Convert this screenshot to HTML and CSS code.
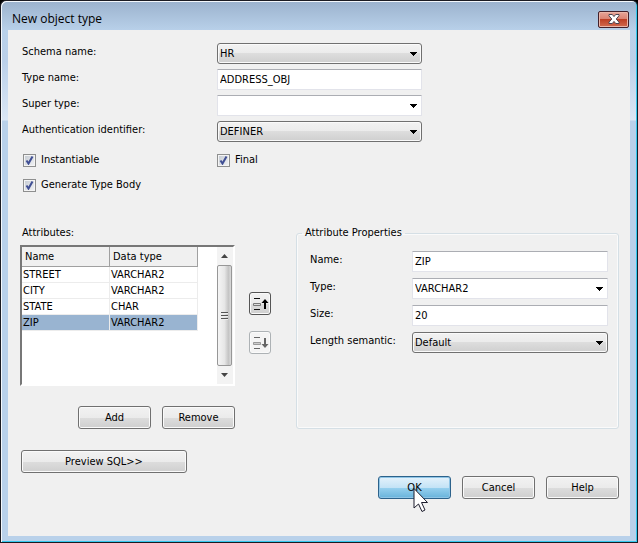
FILE: index.html
```html
<!DOCTYPE html>
<html lang="en">
<head>
    <meta charset="UTF-8">
    <title>New object type</title>
    <link rel="stylesheet" href="styles.css">
</head>
<body>
    <div class="window">
        <header class="titlebar">
            <h1>New object type</h1>
            <button type="button" class="close" aria-label="Close">
                <svg width="12" height="10" viewBox="0 0 12 10">
                    <path d="M1 .5h3.300L6 2.600 7.700 .5H11v1.300L8.200 5 11 8.200v1.300H7.700L6 7.400 4.300 9.500H1V8.200L3.800 5 1 1.800z" fill="#fff" stroke="#4c4552"/>
                </svg>
            </button>
        </header>

        <form class="panel">
            <div class="fields">
                <label for="schema">Schema name:</label>
                <select id="schema"><option>HR</option></select>
                <label for="typeName">Type name:</label>
                <input type="text" id="typeName" value="ADDRESS_OBJ">
                <label for="superType">Super type:</label>
                <select id="superType" class="combo"><option></option></select>
                <label for="auth">Authentication identifier:</label>
                <select id="auth"><option>DEFINER</option></select>
            </div>

            <div class="checks">
                <label><input type="checkbox" checked> Instantiable</label>
                <label><input type="checkbox" checked> Final</label>
                <label><input type="checkbox" checked> Generate Type Body</label>
            </div>

            <div class="middle">
                <div class="attributes">
                    <h2 id="attrTitle">Attributes:</h2>
                    <div class="listbox">
                        <table aria-labelledby="attrTitle">
                            <thead>
                                <tr><th>Name</th><th>Data type</th></tr>
                            </thead>
                            <tbody>
                                <tr><td>STREET</td><td>VARCHAR2</td></tr>
                                <tr><td>CITY</td><td>VARCHAR2</td></tr>
                                <tr><td>STATE</td><td>CHAR</td></tr>
                                <tr class="selected"><td>ZIP</td><td>VARCHAR2</td></tr>
                            </tbody>
                        </table>
                        <div class="scrollbar">
                            <svg width="15" height="18" viewBox="0 0 15 18"><path d="M4 11h7L7.500 7z" fill="#444"/></svg>
                            <div class="thumb"><span></span></div>
                            <svg width="15" height="18" viewBox="0 0 15 18"><path d="M4 7h7l-3.500 4z" fill="#444"/></svg>
                        </div>
                    </div>
                    <div class="list-buttons">
                        <button type="button">Add</button>
                        <button type="button">Remove</button>
                    </div>
                </div>

                <div class="order">
                    <button type="button" aria-label="Move up">
                        <svg width="18" height="14" viewBox="0 0 18 14">
                            <path d="M3 1.500h6M3 12.500h6" stroke="#111"/>
                            <path d="M2.500 6.500h7v2h-7z" fill="#ddd" stroke="#777"/>
                            <path d="M14 2l3.500 4H15v6h-2V6h-2.500z" fill="#000"/>
                        </svg>
                    </button>
                    <button type="button" aria-label="Move down" disabled>
                        <svg width="18" height="14" viewBox="0 0 18 14">
                            <path d="M3 1.500h6M3 12.500h6" stroke="#666"/>
                            <path d="M2.500 6.500h7v2h-7z" fill="#ccc" stroke="#999"/>
                            <path d="M14 12l3.500-4H15V2h-2v6h-2.500z" fill="#666"/>
                        </svg>
                    </button>
                </div>

                <fieldset>
                    <legend>Attribute Properties</legend>
                    <div class="props">
                        <label for="attrName">Name:</label>
                        <input type="text" id="attrName" value="ZIP">
                        <label for="attrType">Type:</label>
                        <select id="attrType" class="combo"><option>VARCHAR2</option></select>
                        <label for="attrSize">Size:</label>
                        <input type="text" id="attrSize" value="20">
                        <label for="semantic">Length semantic:</label>
                        <select id="semantic"><option>Default</option></select>
                    </div>
                </fieldset>
            </div>

            <button type="button" class="preview">Preview SQL&gt;&gt;</button>

            <div class="footer">
                <button type="button" class="ok">OK
                    <svg class="cursor" width="17" height="26" viewBox="0 0 17 26">
                        <path d="M1 1.500v19.500l4.500-4 3.500 7.500 3-1.500-3.500-7.500h6z" fill="#fff" stroke="#1c1c2c"/>
                    </svg>
                </button>
                <button type="button">Cancel</button>
                <button type="button">Help</button>
            </div>
        </form>
    </div>
</body>
</html>
```

FILE: styles.css
```css
* {
    box-sizing: border-box;
}
body {
    margin: 0;
    background: #000;
    font: 11px/16px "DejaVu Sans Condensed", "Noto Sans", sans-serif;
    color: #000;
}
.window {
    display: flex;
    flex-direction: column;
    min-height: 100vh;
    padding: 0 6px 6px;
    border: 1px solid #1b1b22;
    border-right: 1px solid #10222c;
    border-radius: 6px 6px 0 0;
    background: linear-gradient(#9bb2cd, #b9d1ea 30px, #bbd0e9 60px, #dbe7f5 119px, #b9d1ea 120px);
    box-shadow: inset 1px 1px #f4f8fc, inset -1px -1px #35c8ee;
}
.titlebar {
    display: flex;
    justify-content: space-between;
    align-items: center;
    height: 29px;
    padding: 7px 2px 0 5px;
}
.titlebar h1 {
    margin: 0;
    font: 12px/20px "Open Sans", sans-serif;
}
button {
    height: 23px;
    padding: 0;
    border: 1px solid #707070;
    border-radius: 3px;
    background: linear-gradient(#f2f2f2, #ebebeb 50%, #dddddd 50%, #cfcfcf);
    box-shadow: inset 0 0 0 1px #fafafa;
    font: inherit;
    color: #000;
}
.close {
    display: grid;
    place-items: center;
    width: 31px;
    height: 17px;
    border-color: #43202a;
    border-radius: 2px;
    background: linear-gradient(#e8a598, #d9806f 50%, #bd3f25 50%, #d26b50);
    box-shadow: inset 0 0 0 1px #eab5a8;
}
.panel {
    flex: 1;
    margin: 0 1px;
    padding: 13px 11px 20px 12px;
    background: #f0f0f0;
}
.fields, .props {
    display: grid;
    gap: 5px 0;
}
.fields {
    grid-template-columns: 197px minmax(0, 205px);
}
.fields label, .props label {
    display: flex;
    align-items: center;
    padding: 0 0 3px 2px;
}
input[type="text"], select {
    width: 100%;
    height: 21px;
    margin: 0;
    padding: 0 2px;
    border: 1px solid #e2e3ea;
    border-top-color: #abadb3;
    border-radius: 1px;
    background: #fff;
    font: inherit;
    color: #000;
}
select {
    appearance: none;
    border: 1px solid #707070;
    border-radius: 3px;
    background: url("data:image/svg+xml,%3Csvg xmlns='http://www.w3.org/2000/svg' width='7' height='4' shape-rendering='crispEdges'%3E%3Cpath d='M0 0h7v1H0zM1 1h5v1H1zM2 2h3v1H2zM3 3h1v1H3z'/%3E%3C/svg%3E") no-repeat right 4px center, linear-gradient(#f2f2f2, #ebebeb 50%, #dddddd 50%, #cfcfcf);
    box-shadow: inset 0 0 0 1px #fafafa;
}
select.combo {
    border: 1px solid #e2e3ea;
    border-top-color: #abadb3;
    border-radius: 1px;
    background-color: #fff;
    background-image: url("data:image/svg+xml,%3Csvg xmlns='http://www.w3.org/2000/svg' width='7' height='4' shape-rendering='crispEdges'%3E%3Cpath d='M0 0h7v1H0zM1 1h5v1H1zM2 2h3v1H2zM3 3h1v1H3z'/%3E%3C/svg%3E");
    box-shadow: none;
}
.checks {
    display: grid;
    grid-template-columns: 194px 1fr;
    gap: 5px 0;
    padding: 8px 0 0 3px;
}
.checks label {
    display: flex;
    align-items: center;
    gap: 5px;
    height: 20px;
}
.checks input {
    appearance: none;
    width: 13px;
    height: 13px;
    margin: 0;
    border: 1px solid #8e8f8f;
    background: url("data:image/svg+xml,%3Csvg xmlns='http://www.w3.org/2000/svg' width='11' height='11'%3E%3Cpath d='M2.500 5.500l2 3 4-7' fill='none' stroke='%23404f94' stroke-width='2'/%3E%3C/svg%3E"), linear-gradient(135deg, #c3c9d1, #f3f4f6);
    box-shadow: inset 0 0 0 1px #f4f4f4;
}
.middle {
    display: flex;
    padding-top: 30px;
}
.attributes {
    width: 215px;
}
.attributes h2 {
    margin: 0 0 4px 2px;
    font: inherit;
}
.listbox {
    display: flex;
    justify-content: space-between;
    height: 141px;
    border: 2px solid #fff;
    border-top-color: #777;
    border-left-color: #777;
    background: #fff;
}
table {
    align-self: flex-start;
    width: 176px;
    table-layout: fixed;
    border-spacing: 0;
}
th {
    height: 20px;
    padding: 0 3px;
    border-right: 1px solid #a0a0a0;
    border-bottom: 1px solid #a0a0a0;
    background: #f0f0f0;
    font-weight: normal;
    text-align: left;
}
td {
    height: 16px;
    padding: 0 1px;
    border-right: 1px solid #ececec;
    border-bottom: 1px solid #ececec;
    line-height: 15px;
}
.selected td {
    background: #99b4d1;
}
.scrollbar {
    display: flex;
    flex-direction: column;
    width: 16px;
    background: #f3f3f3;
}
.thumb {
    flex: 1;
    display: grid;
    place-items: center;
    width: 15px;
    border: 1px solid #979797;
    border-radius: 2px;
    background: linear-gradient(90deg, #f5f5f5, #e6e6e6 50%, #c4c4c4 80%, #dadada);
}
.thumb span {
    width: 7px;
    height: 8px;
    background: repeating-linear-gradient(#555 0 1px, #eee 1px 2px, transparent 2px 3px);
}
.list-buttons {
    display: flex;
    justify-content: flex-end;
    gap: 11px;
    padding-top: 20px;
}
.list-buttons button, .footer button {
    width: 73px;
}
.order {
    display: flex;
    flex-direction: column;
    gap: 16px;
    padding: 67px 25px 0 14px;
}
.order button {
    display: grid;
    place-items: center;
    width: 22px;
    border-color: #555;
}
.order button:disabled {
    border-color: #adb2b5;
    background: #f4f4f4;
}
fieldset {
    flex: 1;
    min-width: 0;
    margin: 0;
    padding: 10px 10px 0 11px;
    border: 1px solid #d5dfe5;
    border-radius: 3px;
    box-shadow: inset 0 0 0 1px #fafafa;
}
legend {
    margin-left: -6px;
    padding: 0 3px;
}
.props {
    grid-template-columns: 104px minmax(0, 1fr);
    row-gap: 6px;
}
.preview {
    display: block;
    width: 166px;
    margin: 21px 0 3px 1px;
}
.footer {
    display: flex;
    justify-content: flex-end;
    gap: 11px;
}
.footer .ok {
    position: relative;
    border-color: #2c628b;
    background: linear-gradient(#e4f2fb, #c4e3f6 50%, #98d1ef 50%, #68b3db);
    box-shadow: inset 0 0 0 1px #8fc5e6;
}
.cursor {
    position: absolute;
    left: 34px;
    top: 10px;
}
```
